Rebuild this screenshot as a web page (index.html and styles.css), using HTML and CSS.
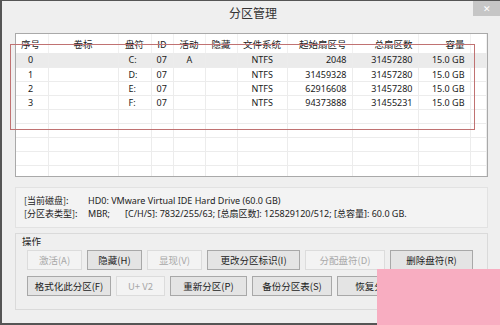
FILE: index.html
```html
<!DOCTYPE html>
<html lang="zh-CN">
<head>
  <meta charset="UTF-8">
  <title>分区管理</title>
  <link rel="stylesheet" href="styles.css">
</head>
<body>
  <div class="window">
    <div class="titlebar">
      <span class="title">分区管理</span>
      <div class="close">&#x2715;</div>
    </div>

    <div class="list">
      <table class="parts">
        <colgroup>
          <col class="c-no"><col class="c-label"><col class="c-drive"><col class="c-id">
          <col class="c-act"><col class="c-hide"><col class="c-fs"><col class="c-start">
          <col class="c-total"><col class="c-size"><col>
        </colgroup>
        <thead>
          <tr>
            <th class="left">序号</th>
            <th>卷标</th>
            <th>盘符</th>
            <th>ID</th>
            <th>活动</th>
            <th>隐藏</th>
            <th>文件系统</th>
            <th class="num">起始扇区号</th>
            <th class="num">总扇区数</th>
            <th class="num">容量</th>
            <th></th>
          </tr>
        </thead>
        <tbody>
          <tr class="selected">
            <td class="idx">0</td><td></td><td class="drv">C:</td><td class="idc">07</td><td class="act">A</td><td></td><td class="fs">NTFS</td><td class="num">2048</td><td class="num">31457280</td><td class="num">15.0 GB</td><td></td>
          </tr>
          <tr>
            <td class="idx">1</td><td></td><td class="drv">D:</td><td class="idc">07</td><td></td><td></td><td class="fs">NTFS</td><td class="num">31459328</td><td class="num">31457280</td><td class="num">15.0 GB</td><td></td>
          </tr>
          <tr>
            <td class="idx">2</td><td></td><td class="drv">E:</td><td class="idc">07</td><td></td><td></td><td class="fs">NTFS</td><td class="num">62916608</td><td class="num">31457280</td><td class="num">15.0 GB</td><td></td>
          </tr>
          <tr>
            <td class="idx">3</td><td></td><td class="drv">F:</td><td class="idc">07</td><td></td><td></td><td class="fs">NTFS</td><td class="num">94373888</td><td class="num">31455231</td><td class="num">15.0 GB</td><td></td>
          </tr>
          <tr><td></td><td></td><td></td><td></td><td></td><td></td><td></td><td></td><td></td><td></td><td></td></tr>
          <tr><td></td><td></td><td></td><td></td><td></td><td></td><td></td><td></td><td></td><td></td><td></td></tr>
          <tr><td></td><td></td><td></td><td></td><td></td><td></td><td></td><td></td><td></td><td></td><td></td></tr>
          <tr><td></td><td></td><td></td><td></td><td></td><td></td><td></td><td></td><td></td><td></td><td></td></tr>
          <tr><td></td><td></td><td></td><td></td><td></td><td></td><td></td><td></td><td></td><td></td><td></td></tr>
        </tbody>
      </table>
    </div>

    <div class="info">
      <div class="info-row">
        <span class="key">[当前磁盘]:</span>
        <span>HD0: VMware Virtual IDE Hard Drive (60.0 GB)</span>
      </div>
      <div class="info-row">
        <span class="key">[分区表类型]:</span>
        <span class="mbr">MBR;</span>
        <span>[C/H/S]: 7832/255/63; [总扇区数]: 125829120/512; [总容量]: 60.0 GB.</span>
      </div>
    </div>

    <div class="group">
      <div class="group-title">操作</div>
      <div class="btn-row">
        <button class="btn w55" disabled>激活(A)</button>
        <button class="btn w55">隐藏(H)</button>
        <button class="btn w55" disabled>显现(V)</button>
        <button class="btn w93">更改分区标识(I)</button>
        <button class="btn w80" disabled>分配盘符(D)</button>
        <button class="btn w83">删除盘符(R)</button>
      </div>
      <div class="btn-row">
        <button class="btn w84">格式化此分区(F)</button>
        <button class="btn w49" disabled>U+ V2</button>
        <button class="btn w77">重新分区(P)</button>
        <button class="btn w80">备份分区表(S)</button>
        <button class="btn w84">恢复分区表</button>
      </div>
    </div>

    <!-- red annotation frame and pink watermark block -->
    <div class="mark"></div>
    <div class="stamp"></div>
  </div>
</body>
</html>
```

FILE: styles.css
```css
* {
  box-sizing: border-box;
}
body {
  margin: 0;
  width: 500px;
  height: 325px;
  overflow: hidden;
  font-family: "Noto Sans", "Noto Sans CJK SC", sans-serif;
  color: #222;
}
.window {
  position: relative;
  width: 500px;
  height: 325px;
  background: #efefef;
  border-top: 1px solid #555;
  border-left: 2px solid #555;
  border-bottom: 2px solid #555;
  padding: 0 12px 0 13px;
  display: flex;
  flex-direction: column;
}
.titlebar {
  height: 23px;
  margin: 0 -12px 0 -13px;
  display: flex;
  justify-content: center;
  align-items: center;
}
.title {
  font-family: "Noto Sans CJK SC", sans-serif;
  font-size: 12px;
  color: #333;
  padding-left: 4px;
}
.close {
  position: absolute;
  top: 0;
  right: 0;
  width: 27px;
  height: 15px;
  background: #c6c6c6;
  color: #fff;
  font-size: 9px;
  line-height: 15px;
  text-align: center;
}

.list {
  margin-top: 9px;
  height: 144px;
  background: #fff;
  border: 1px solid #a9a9a9;
  overflow: hidden;
}
.parts {
  width: 100%;
  border-collapse: collapse;
  table-layout: fixed;
  font-size: 9px;
}
.c-no { width: 32px; }
.c-label { width: 70px; }
.c-drive { width: 33px; }
.c-id { width: 22px; }
.c-act { width: 32px; }
.c-hide { width: 32px; }
.c-fs { width: 50px; }
.c-start { width: 65px; }
.c-total { width: 66px; }
.c-size { width: 52px; }
.parts th {
  height: 19px;
  font-family: "Noto Sans CJK SC", sans-serif;
  font-weight: normal;
  font-size: 9.5px;
  color: #222;
  text-align: center;
  padding: 0 5px;
  white-space: nowrap;
  border-right: 1px solid #f1f1f1;
}
.parts th.left {
  text-align: left;
}
.parts th.num {
  text-align: right;
}
.parts td {
  height: 14px;
  padding: 0 5px;
  border-right: 1px solid #ececec;
  border-bottom: 1px solid #ececec;
  white-space: nowrap;
  color: #1a1a1a;
}
.parts tr.selected td {
  background: #ebebeb;
}
.parts td.num {
  text-align: right;
}
.parts td.idx {
  padding-left: 12px;
}
.parts td.drv {
  padding-left: 10px;
}
.parts td.fs {
  padding-left: 14px;
}
.parts td.act {
  padding-left: 13px;
}

.info {
  margin-top: 10px;
  height: 41px;
  background: #f3f3f3;
  border: 1px solid #e2e2e2;
  padding: 6px 0 0 8px;
  font-size: 9px;
  line-height: 13px;
  color: #222;
}
.info-row {
  display: flex;
  white-space: nowrap;
}
.key {
  font-family: "Noto Sans CJK SC", sans-serif;
  width: 64px;
}
.mbr {
  width: 37px;
}

.group {
  margin-top: 5px;
  height: 77px;
  border: 1px solid #dadada;
  padding: 0 0 0 11px;
}
.group-title {
  font-family: "Noto Sans CJK SC", sans-serif;
  font-size: 9.5px;
  line-height: 14px;
  color: #222;
  margin-left: -5px;
}
.btn-row {
  display: flex;
  gap: 5px;
  margin-top: 2px;
}
.btn-row + .btn-row {
  margin-top: 6px;
}
.btn {
  height: 20px;
  padding: 0;
  background: #e4e4e4;
  border: 1px solid #a8a8a8;
  font-family: "Noto Sans CJK SC", sans-serif;
  font-size: 9.5px;
  color: #222;
}
.btn:disabled {
  background: #f3f3f3;
  border-color: #dcdcdc;
  color: #a8a8a8;
}
.w49 { width: 49px; }
.w55 { width: 55px; }
.w77 { width: 77px; }
.w80 { width: 80px; }
.w83 { width: 83px; }
.w84 { width: 84px; }
.w93 { width: 93px; }

.mark {
  position: absolute;
  left: 8px;
  top: 43px;
  width: 465px;
  height: 86px;
  border: 1px solid #c07272;
}
.stamp {
  position: absolute;
  left: 375px;
  top: 268px;
  width: 125px;
  height: 57px;
  background: #f8adc1;
}
```
